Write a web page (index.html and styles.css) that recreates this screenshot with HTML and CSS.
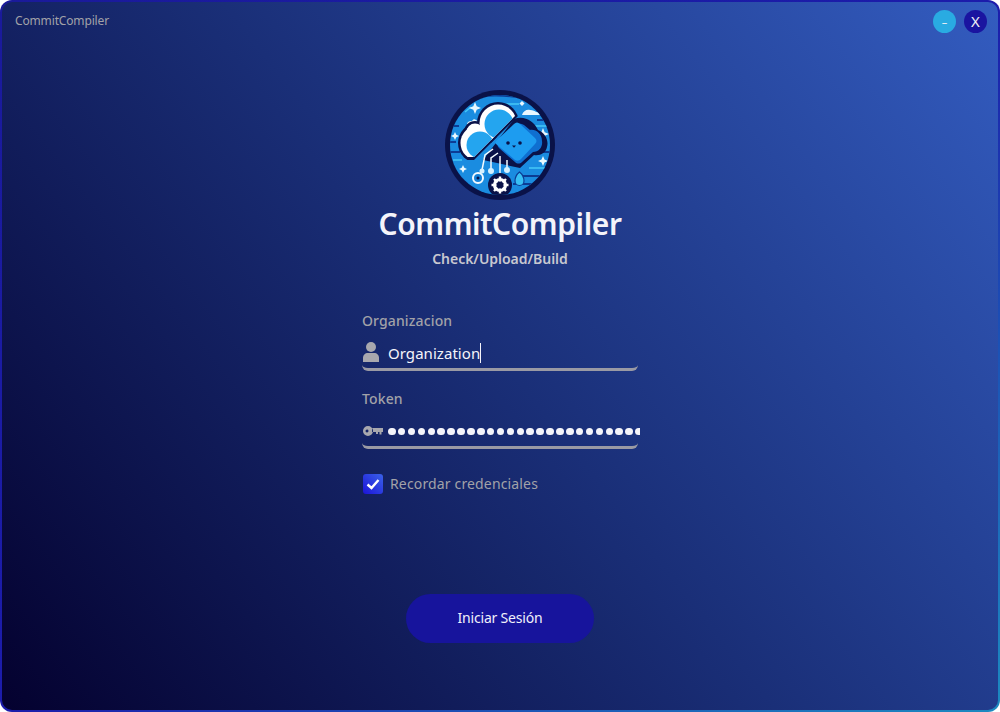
FILE: index.html
```html
<!DOCTYPE html>
<html lang="es">
<head>
<meta charset="utf-8">
<title>CommitCompiler</title>
<link rel="stylesheet" href="styles.css">
</head>
<body>
<div class="window">
  <header class="titlebar">
    <span class="app-name">CommitCompiler</span>
    <div class="win-buttons">
      <button class="win-btn min">–</button>
      <button class="win-btn close">X</button>
    </div>
  </header>
  <main class="content">
    <svg class="logo" viewBox="0 0 110 110" aria-hidden="true">
      <defs>
        <clipPath id="disc"><circle cx="55" cy="55" r="50"/></clipPath>
        <clipPath id="cloud-half"><path d="M0 0H96L29 67H0z"/></clipPath>
        <clipPath id="cloud-outline"><path d="M0 0H99L29 70H0z"/></clipPath>
      </defs>
      <circle cx="55" cy="55" r="55" fill="#0a1248"/>
      <circle cx="55" cy="55" r="50" fill="#1a8ce0"/>
      <g clip-path="url(#disc)">
        <g fill="none" stroke="#0c3c94" stroke-width="2">
          <path d="M24 9c10-4 40-5 56 0M3 36h11M3 52h8M5 62h10M92 62h14M78 86h22M68 94h24M12 84l10 10M92 30h12"/>
        </g>
        <g fill="none" stroke="#45c8f6" stroke-width="1.600">
          <path d="M20 22l6-5M60 14h14M88 36h14M84 78h18M8 70h9"/>
        </g>
        <g fill="#e9f8ff">
          <path d="M30 12l1.700 4.300 4.300 1.700-4.300 1.700-1.700 4.300-1.700-4.300-4.300-1.700 4.300-1.700z"/>
          <path d="M98 38l1.700 4.300 4.300 1.700-4.300 1.700-1.700 4.300-1.700-4.300-4.300-1.700 4.300-1.700z"/>
          <path d="M98 66l1.500 3.500 3.500 1.500-3.500 1.500-1.500 3.500-1.500-3.500-3.500-1.500 3.500-1.500z"/>
          <path d="M10 42l1.300 2.700 2.700 1.300-2.700 1.300-1.300 2.700-1.300-2.700-2.700-1.300 2.700-1.300z"/>
          <path d="M18 75l1.300 2.700 2.700 1.300-2.700 1.300-1.300 2.700-1.300-2.700-2.700-1.300 2.700-1.300z"/>
          <path d="M77 11l2.500 2.500-2.500 2.500-2.500-2.500z"/>
          <path d="M77 25c1-4 5-6 8-5 3 0 5 1 6 2 3 0 5 1 6 3z"/>
          <path d="M22 34c1-3 3-3 5-3 1-2 3-2 4-1l4 3-4 6h-5c0-2-2-4-4-5z"/>
        </g>
        <g clip-path="url(#cloud-outline)" fill="#0a1248">
          <circle cx="33" cy="53" r="20"/><circle cx="53" cy="33" r="21"/><circle cx="30" cy="42" r="11"/>
        </g>
        <g clip-path="url(#cloud-half)" fill="#fff">
          <circle cx="33" cy="53" r="17.500"/><circle cx="53" cy="33" r="18.500"/><circle cx="30" cy="42" r="8.500"/>
        </g>
        <g clip-path="url(#cloud-half)" fill="#24a5ef">
          <circle cx="35" cy="55" r="13.500"/><circle cx="54" cy="34" r="14.500"/>
        </g>
        <path d="M38 70L69 29c10-4 20 2 24 11 7 3 11 10 9 17-1 6-7 9-13 8L75 78z" fill="#0a1248"/>
        <path d="M54 52L70 35c3-2 6-2 9 0l6 5c6-1 12 4 12 11 1 6-3 11-9 11L77 72c-2 2-5 2-7 0L54 58c-2-2-2-4 0-6z" fill="#0f6fd0"/>
        <path d="M51 54c-1-1-1-2 0-3L69 34c2-2 4-2 6 0l15 14c2 2 2 4 0 6L76 69c-2 2-4 2-6 1z" fill="#1d9cf0"/>
        <g fill="#0a1248"><circle cx="63" cy="53" r="1.800"/><circle cx="75" cy="53" r="1.800"/><path d="M67 55.500h4l-2 2.200z"/></g>
        <g fill="none" stroke="#f4fbff" stroke-width="1.500">
          <path d="M48 59l-8 6-3 15"/>
          <path d="M53 63l-7 5v13"/>
          <path d="M55 66v18"/>
          <path d="M62 70v10"/>
        </g>
        <g fill="#d5f1ff"><circle cx="37" cy="81" r="2.500"/><circle cx="46" cy="81" r="3"/><circle cx="62" cy="80" r="3"/></g>
        <circle cx="33" cy="88" r="5" fill="#1582d8" stroke="#f4fbff" stroke-width="2"/>
        <circle cx="33" cy="88" r="1.500" fill="#0a1248"/>
        <path d="M70 91c0-4 2-7 4.500-9 2.500 2 4.500 5 4.500 9a4.500 4.500 0 0 1-9 0z" fill="#38c0f4" stroke="#0c3c94" stroke-width="1.200"/>
        <circle cx="55" cy="95" r="12" fill="#0a1248"/>
        <circle cx="55" cy="95" r="5.500" fill="none" stroke="#fff" stroke-width="3.200"/>
        <path d="M55 86.500v17M46.500 95h17M49 89l12 12M61 89l-12 12" stroke="#fff" stroke-width="2.400"/>
        <circle cx="55" cy="95" r="3.500" fill="#0a1248"/>
      </g>
    </svg>
    <h1 class="title">CommitCompiler</h1>
    <p class="subtitle">Check/Upload/Build</p>

    <form class="form">
      <label class="label">Organizacion</label>
      <div class="field">
        <svg class="icon user" viewBox="0 0 16 20" aria-hidden="true">
          <circle cx="8" cy="5" r="5" fill="#a8a8ae"/>
          <path d="M0 20v-4c0-3 2-5 5-5h6c3 0 5 2 5 5v4z" fill="#a8a8ae"/>
        </svg>
        <span class="value">Organization</span><span class="caret"></span>
      </div>

      <label class="label token">Token</label>
      <div class="field">
        <svg class="icon key" viewBox="0 0 20 10" aria-hidden="true">
          <path d="M5 0a5 5 0 1 1-.01 10A5 5 0 0 1 5 0zm-1 3.500a1.500 1.500 0 1 0 .01 3 1.500 1.500 0 0 0-.01-3zM9 2h11v4h-1.500v2.500h-2V6h-1.500V8h-2V6H9z" fill="#a8a8ae" fill-rule="evenodd"/>
        </svg>
        <span class="dots"><i></i><i></i><i></i><i></i><i></i><i></i><i></i><i></i><i></i><i></i><i></i><i></i><i></i><i></i><i></i><i></i><i></i><i></i><i></i><i></i><i></i><i></i><i></i><i></i><i></i><i></i></span>
      </div>

      <div class="remember">
        <span class="checkbox">
          <svg viewBox="0 0 20 20" aria-hidden="true"><path d="M4.500 10.500l4 3.500 7-8" fill="none" stroke="#fff" stroke-width="2.400"/></svg>
        </span>
        <span class="remember-text">Recordar credenciales</span>
      </div>
    </form>

    <button class="login">Iniciar Sesión</button>
  </main>
</div>
</body>
</html>
```
FILE: styles.css
```css
* { box-sizing: border-box; }
html, body { margin: 0; height: 100%; background: #fff; }
body { font-family: "Noto Sans", "Open Sans", sans-serif; overflow: hidden; }
.window {
  width: 1000px;
  height: 712px;
  border: 2px solid transparent;
  border-radius: 12px;
  background:
    linear-gradient(52deg, #04012f 0%, #1a2f78 50%, #335cc0 100%) padding-box,
    linear-gradient(to bottom right, #1a1a9a 0%, #1c1cab 50%, #1c8ac0 100%) border-box;
  display: flex;
  flex-direction: column;
}
.titlebar {
  display: flex;
  justify-content: space-between;
  align-items: center;
  padding: 6px 11px 0 13px;
  height: 31px;
}
.app-name { font-size: 12px; color: #a2a2a8; letter-spacing: -0.15px; }
.win-buttons { display: flex; gap: 8px; margin-top: 2px; }
.win-btn {
  width: 23px; height: 23px; border-radius: 50%; border: 0; padding: 0;
  color: #f0f0f6; font-family: "Noto Sans", sans-serif; font-size: 15px; line-height: 23px;
}
.win-btn.min { background: #29abe2; font-size: 11px; }
.win-btn.close { background: #1a14a0; }
.content { flex: 1; display: flex; flex-direction: column; align-items: center; padding-top: 57px; }
.logo { width: 110px; height: 110px; display: block; }
.title { margin: 2px 0 0; font-size: 30px; line-height: 44px; font-weight: 600; color: #f4f4fa; letter-spacing: -0.4px; }
.subtitle { margin: 3px 0 0; font-size: 14px; line-height: 19px; font-weight: 600; color: #c8c8d0; letter-spacing: -0.03px; }
.form { width: 276px; margin-top: 43px; display: flex; flex-direction: column; }
.label { font-size: 14px; line-height: 20px; font-weight: 500; color: #a2a2a8; letter-spacing: 0.13px; }
.label.token { margin-top: 18px; }
.field {
  height: 40px; display: flex; align-items: center; position: relative;
  border-bottom: 3px solid #9a9aa4; border-radius: 0 0 6px 6px; padding-top: 6px;
}
.icon { flex: none; display: block; }
.icon.user { width: 16px; height: 20px; margin: -2px 9px 0 1px; }
.icon.key { width: 20px; height: 10px; margin: 0 5px 0 1px; }
.value { font-size: 15px; color: #f4f4fa; letter-spacing: 0.05px; }
.caret { width: 1px; height: 20px; background: #f4f4fa; }
.dots { display: flex; gap: 2.400px; margin-top: 2px; width: 252px; flex: none; overflow: hidden; margin-right: -2px; }
.dots i { flex: none; width: 7.500px; height: 7.500px; border-radius: 50%; background: #f4f4fa; }
.remember { display: flex; align-items: center; gap: 7px; margin-top: 25px; padding-left: 1px; }
.checkbox {
  width: 20px; height: 20px; border-radius: 3px; display: block;
  background: linear-gradient(45deg, #1c14d8, #3a62e8);
}
.checkbox svg { display: block; width: 20px; height: 20px; }
.remember-text { font-size: 14px; color: #a2a2a8; letter-spacing: 0.15px; margin-top: -2px; }
.login {
  margin-top: 100px; width: 188px; height: 49px; border: 0; border-radius: 25px; padding: 0 0 2px;
  background: #17149c; color: #f0f0fa; font-family: "Noto Sans", sans-serif; font-size: 14px; letter-spacing: -0.2px;
}
```
